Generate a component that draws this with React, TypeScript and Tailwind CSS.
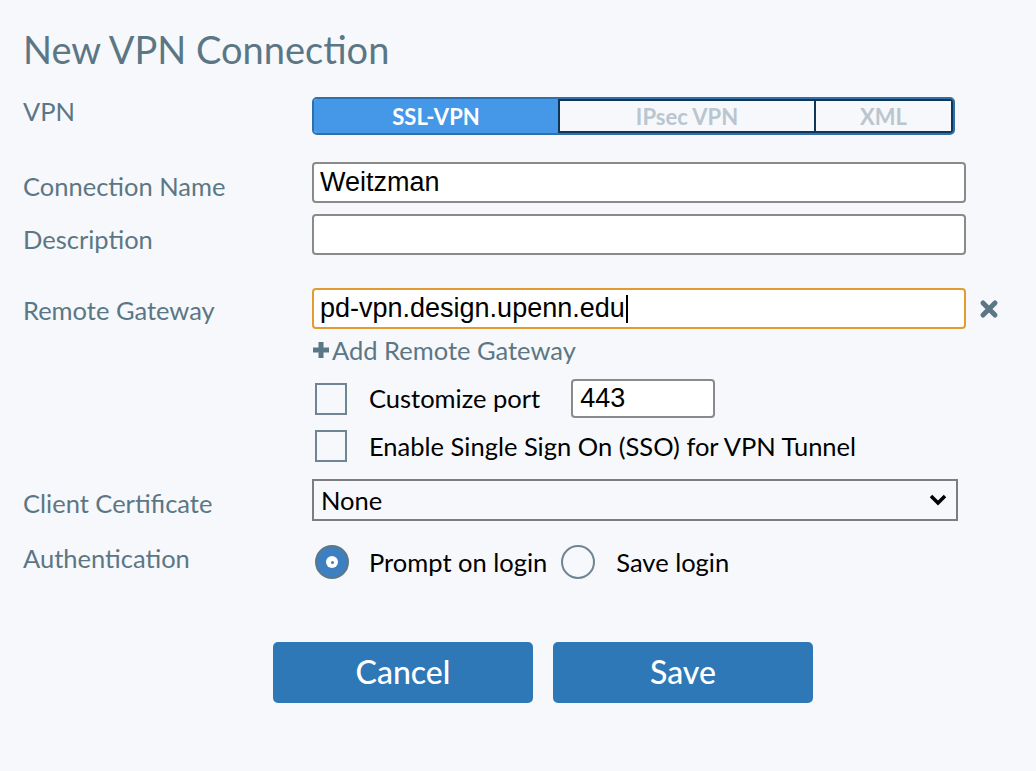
import React from 'react'

const label = 'text-[25.5px] text-[#5b7785] leading-none'
const field =
  "h-[41px] w-full rounded-[4px] border-2 border-[#8a8a8a] bg-white px-[6px] text-[27px] text-black outline-none [font-family:'Liberation_Sans',Arial,sans-serif]"

const Checkbox = () => (
  <span className="block h-[32px] w-[32px] border-2 border-[#6f8593] bg-[#f7f8fb]" />
)

export default function App() {
  return (
    <div className="min-h-[771px] w-[1036px] bg-[#f7f8fb] [font-family:Lato,'Open_Sans',sans-serif]">
      <div className="pl-[23px] pt-[27px]">
        <h1 className="text-[38px] leading-[44px] text-[#5b7785]">New VPN Connection</h1>

        {/* VPN type */}
        <div className="mt-[26px] grid grid-cols-[289px_1fr] items-center">
          <div className={`${label} pb-[8px]`}>VPN</div>
          <div className="flex h-[38px] w-[643px] overflow-hidden rounded-[5px] border-2 border-[#2f6fab] text-[22px] font-bold">
            <div className="flex w-[244px] items-center justify-center bg-[#4597e8] text-white">SSL-VPN</div>
            <div className="flex w-[258px] items-center justify-center border-2 border-[#0f3557] bg-[#f7f8fb] text-[#b9c6cf]">IPsec VPN</div>
            <div className="flex flex-1 items-center justify-center border-2 border-l-0 border-[#0f3557] bg-[#f7f8fb] text-[#b9c6cf]">XML</div>
          </div>
        </div>

        {/* Connection name / description */}
        <div className="mt-[27px] grid grid-cols-[289px_654px] items-center gap-y-[11px]">
          <div className={`${label} pt-[8px]`}>Connection Name</div>
          <input className={field} defaultValue="Weitzman" />
          <div className={`${label} pt-[10px]`}>Description</div>
          <input className={field} defaultValue="" />
        </div>

        {/* Remote gateway */}
        <div className="mt-[33px] grid grid-cols-[289px_654px_1fr] items-center">
          <div className={`${label} pt-[4px]`}>Remote Gateway</div>
          <div className="flex h-[41px] w-full items-center rounded-[4px] border-2 border-[#e19b32] bg-white px-[6px] text-[27px] text-black [font-family:'Liberation_Sans',Arial,sans-serif]">
            pd-vpn.design.upenn.edu<span className="ml-px inline-block h-[28px] w-[2px] bg-black" />
          </div>
          <div className="pl-[13px]">
            <svg width="20" height="20" viewBox="0 0 20 20">
              <path d="M4 4 L16 16 M16 4 L4 16" stroke="#5b7785" strokeWidth="5" strokeLinecap="round" />
            </svg>
          </div>
        </div>

        <div className="ml-[289px] mt-[6px] flex items-center text-[25.5px] leading-[30px] text-[#5b7785]">
          <svg width="18" height="18" viewBox="0 0 18 18" className="mr-[2px]">
            <path d="M9 1 V17 M1 9 H17" stroke="#5b7785" strokeWidth="5" />
          </svg>
          Add Remote Gateway
        </div>

        <div className="ml-[292px] mt-[14px] flex items-center text-[25.5px] text-black">
          <Checkbox />
          <span className="ml-[22px]">Customize port</span>
          <input
            className="ml-[31px] h-[39px] w-[144px] rounded-[4px] border-2 border-[#8a8a8a] bg-white px-[7px] text-[27px] text-black outline-none [font-family:'Liberation_Sans',Arial,sans-serif]"
            defaultValue="443"
          />
        </div>

        <div className="ml-[292px] mt-[9px] flex items-center text-[25.5px] text-black">
          <Checkbox />
          <span className="ml-[22px]">Enable Single Sign On (SSO) for VPN Tunnel</span>
        </div>

        {/* Client certificate */}
        <div className="mt-[14px] grid grid-cols-[289px_646px] items-center">
          <div className={`${label} pt-[6px]`}>Client Certificate</div>
          <div className="flex h-[42px] items-center justify-between border-2 border-[#7d7d7d] bg-[#f7f8fb] pl-[7px] pr-[8px] text-[25.5px] text-black">
            <span>None</span>
            <svg width="20" height="14" viewBox="0 0 20 14">
              <path d="M3 3 L10 10 L17 3" fill="none" stroke="#000" strokeWidth="3.5" />
            </svg>
          </div>
        </div>

        {/* Authentication */}
        <div className="mt-[22px] grid grid-cols-[289px_1fr] items-center">
          <div className={`${label} pb-[8px]`}>Authentication</div>
          <div className="flex items-center pl-[3px] text-[25.5px] text-black">
            <span className="flex h-[34px] w-[34px] items-center justify-center rounded-full border-2 border-[#5e7888] bg-[#3d7fc1]">
              <span className="flex h-[12px] w-[12px] items-center justify-center rounded-full bg-white">
                <span className="h-[3px] w-[3px] rounded-full bg-[#3d7fc1]" />
              </span>
            </span>
            <span className="ml-[20px]">Prompt on login</span>
            <span className="ml-[14px] h-[34px] w-[34px] rounded-full border-2 border-[#6f8593] bg-[#f7f8fb]" />
            <span className="ml-[21px]">Save login</span>
          </div>
        </div>
      </div>

      <div className="mt-[60px] flex gap-[20px] pl-[273px]">
        <button className="h-[61px] w-[260px] rounded-[5px] bg-[#2f78b8] text-[32px] font-medium text-white">Cancel</button>
        <button className="h-[61px] w-[260px] rounded-[5px] bg-[#2f78b8] text-[32px] font-medium text-white">Save</button>
      </div>
    </div>
  )
}
